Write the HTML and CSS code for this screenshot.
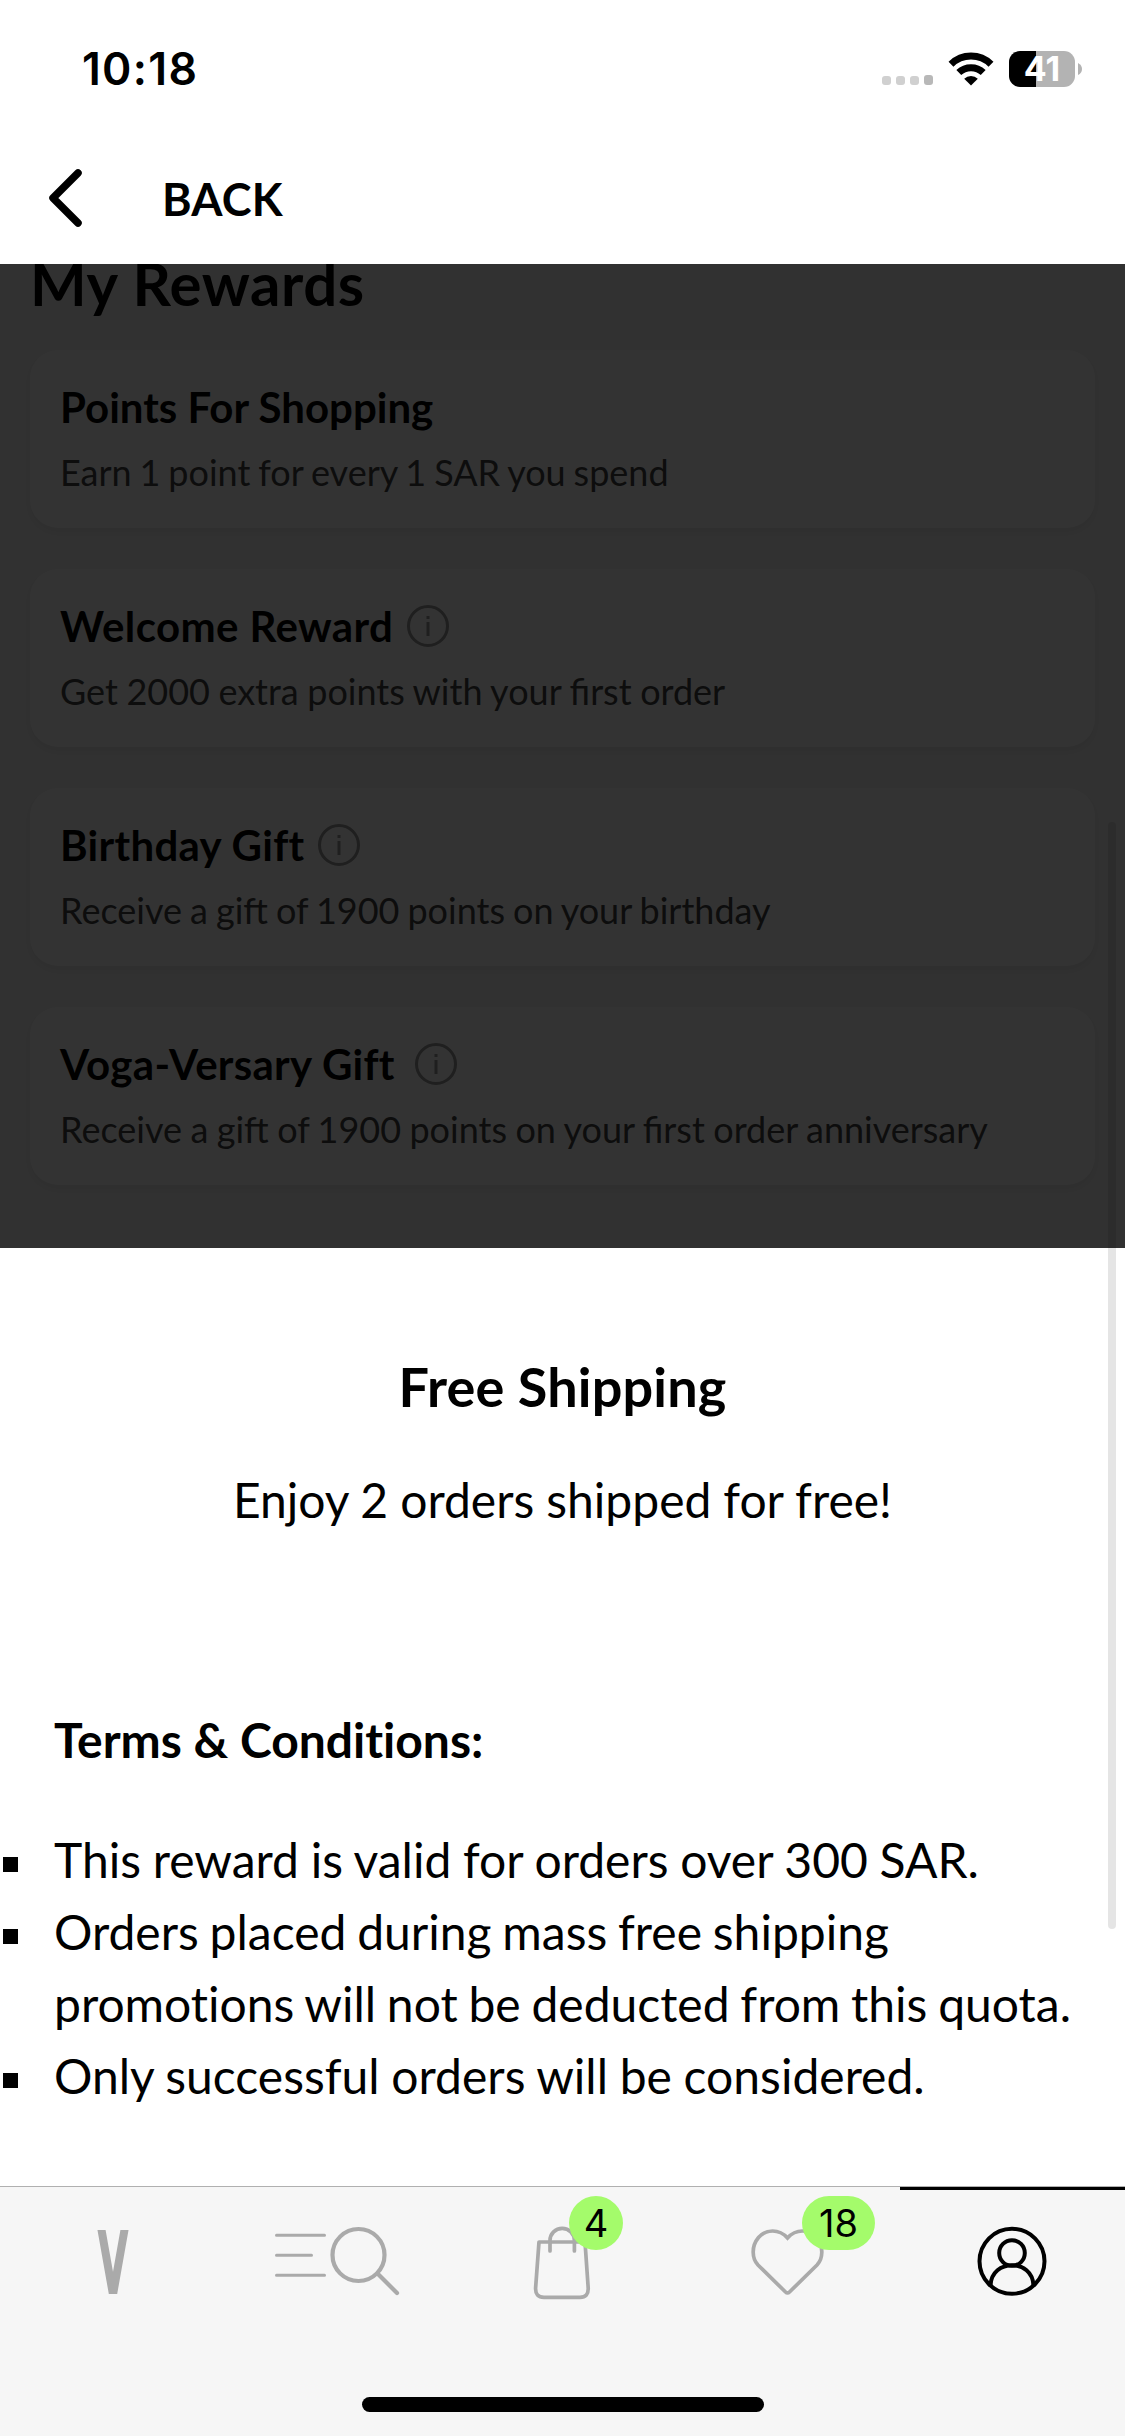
FILE: index.html
```html
<!DOCTYPE html>
<html lang="en">
<head>
<meta charset="utf-8">
<title>My Rewards</title>
<link rel="stylesheet" href="styles.css">
</head>
<body>
<div class="screen">
  <div class="status">
    <span class="time">10:18</span>
    <div class="status-icons">
      <span class="signal"><i></i><i></i><i></i><i class="strong"></i></span>
      <svg class="wifi" width="46" height="34" viewBox="0 0 46 34">
        <g fill="none" stroke="#000">
          <path d="M3 12.2a28.5 28.5 0 0 1 40 0" stroke-width="7"/>
          <path d="M10.8 20.6a17.5 17.5 0 0 1 24.4 0" stroke-width="7"/>
        </g>
        <path d="M23 33.5l-6.8-6.8a9.6 9.6 0 0 1 13.6 0z"/>
      </svg>
      <div class="battery"><span class="level">41</span><svg width="4" height="12" viewBox="0 0 4 12"><path d="M0 0q4 2 4 6t-4 6z" fill="#b3b3b3"/></svg></div>
    </div>
  </div>
  <header class="topbar">
    <svg width="36" height="60" viewBox="0 0 36 60"><path d="M32 6L7 31L32 56" fill="none" stroke="#000" stroke-width="7.500" stroke-linecap="round" stroke-linejoin="round"/></svg>
    <span class="back">BACK</span>
  </header>
  <main class="page">
    <h1 class="heading">My Rewards</h1>
    <section class="cards">
      <article class="card shopping">
        <h2 class="card-title">Points For Shopping</h2>
        <p class="card-text">Earn 1 point for every 1 SAR you spend</p>
      </article>
      <article class="card welcome">
        <h2 class="card-title">Welcome Reward<svg class="info" viewBox="0 0 42 42"><circle cx="21" cy="21" r="19.500"/><path d="M21 17v14M21 11v3"/></svg></h2>
        <p class="card-text">Get 2000 extra points with your first order</p>
      </article>
      <article class="card birthday">
        <h2 class="card-title">Birthday Gift<svg class="info" viewBox="0 0 42 42"><circle cx="21" cy="21" r="19.500"/><path d="M21 17v14M21 11v3"/></svg></h2>
        <p class="card-text">Receive a gift of 1900 points on your birthday</p>
      </article>
      <article class="card versary">
        <h2 class="card-title">Voga-Versary Gift<svg class="info" viewBox="0 0 42 42"><circle cx="21" cy="21" r="19.500"/><path d="M21 17v14M21 11v3"/></svg></h2>
        <p class="card-text">Receive a gift of 1900 points on your first order anniversary</p>
      </article>
    </section>
    <div class="dim"></div>
  </main>
  <section class="sheet">
    <h2 class="sheet-title">Free Shipping</h2>
    <p class="sheet-lead">Enjoy 2 orders shipped for free!</p>
    <h3 class="terms-title">Terms &amp; Conditions:</h3>
    <ul class="terms">
      <li>This reward is valid for orders over 300 SAR.</li>
      <li>Orders placed during mass free shipping promotions will not be deducted from this quota.</li>
      <li>Only successful orders will be considered.</li>
    </ul>
  </section>
  <footer class="bottom">
    <nav class="tabs">
      <a class="tab"><svg class="brand" width="32" height="64" viewBox="0 0 32 64"><path d="M3.100 -8L17.300 72M28.900 -8L14.700 72" fill="none" stroke="#aaa" stroke-width="8"/></svg></a>
      <a class="tab"><svg width="140" height="80" viewBox="0 0 140 80"><g fill="none" stroke="#aaa" stroke-linecap="round"><path d="M8.500 13.300H56.500M8.500 33.300H43.500M8.500 53.300H56.500" stroke-width="3"/><circle cx="90.500" cy="33" r="26" stroke-width="4.200"/><path d="M109.500 51.500L129 71" stroke-width="4.200"/></g></svg></a>
      <a class="tab"><svg width="80" height="80" viewBox="0 0 80 80"><g fill="none" stroke="#aaa" stroke-width="3.700" stroke-linecap="round" stroke-linejoin="round"><path d="M16 20H62L65.200 66Q65.600 75.300 57 75.300H21Q12.200 75.300 12.600 66Z"/><path d="M27 29V18.500A12.200 12.200 0 0 1 51.400 18.500V29"/></g></svg><span class="badge">4</span></a>
      <a class="tab"><svg width="80" height="80" viewBox="0 0 80 80"><path d="M39.500 16C31 6.500 18 7 10.500 15.500C3 24.500 4 36.500 10 43L37.500 70Q39.500 72 41.500 70L69 43C75 36.500 76 24.500 68.500 15.500C61 7 48 6.500 39.500 16Z" fill="none" stroke="#aaa" stroke-width="3.700"/></svg><span class="badge wide">18</span></a>
      <a class="tab active"><svg width="80" height="80" viewBox="0 0 80 80"><g fill="none" stroke="#000" stroke-width="4"><circle cx="39" cy="39.300" r="32.500"/><circle cx="39" cy="31" r="12.800"/><path d="M17.500 63.500C18.500 36.500 59.500 36.500 60.500 63.500"/></g></svg></a>
    </nav>
    <div class="home-indicator"></div>
  </footer>
  <div class="scrollbar"></div>
</div>
</body>
</html>
```
FILE: styles.css
```css
* { box-sizing: border-box; margin: 0; padding: 0; }
body { background: #fff; color: #000; font-family: Lato, "Open Sans", sans-serif; }
.screen { position: relative; display: flex; flex-direction: column; width: 1125px; height: 2436px; overflow: hidden; }

.status { display: flex; justify-content: space-between; align-items: center; height: 138px; padding: 0 43px 0 82px; font-family: Inter, sans-serif; }
.time { font-size: 44.500px; font-weight: 600; line-height: 54px; letter-spacing: 1.300px; }
.status-icons { display: flex; align-items: center; }
.signal { display: flex; align-items: flex-end; gap: 5px; margin: 22px 15px 0 0; }
.signal i { width: 9px; height: 9px; border-radius: 3px; background: #d0d0d0; }
.signal .strong { height: 10px; background: #b8b8b8; }
.wifi { display: block; margin-right: 15px; }
.battery { display: flex; align-items: center; gap: 3px; }
.level { width: 66px; height: 36px; border-radius: 11px; background: linear-gradient(90deg, #000 27px, #b3b3b3 27px); color: #fff; font-size: 34px; font-weight: 700; line-height: 36px; text-align: center; }

.topbar { display: flex; align-items: center; height: 126px; padding: 0 46px 8px; }
.back { margin: 3px 0 0 80px; font-size: 45px; font-weight: 700; line-height: 54px; letter-spacing: .200px; }

.page { position: relative; height: 984px; padding: 0 30px; background: #f6f6f6; overflow: hidden; }
.heading { margin-top: -17px; font-size: 60px; font-weight: 700; line-height: 72px; letter-spacing: .550px; }
.cards { display: flex; flex-direction: column; gap: 41px; margin-top: 31px; }
.card { height: 178px; padding: 32px 30px 0; border-radius: 28px; background: #fff; box-shadow: 0 4px 12px rgba(0, 0, 0, .08); }
.card-title { display: flex; align-items: center; font-size: 42px; font-weight: 700; line-height: 50px; font-variant-ligatures: none; }
.info { width: 42px; height: 42px; fill: none; stroke: #999; stroke-width: 3; }
.card-text { margin-top: 18px; color: #444; font-size: 36px; line-height: 44px; white-space: nowrap; }
.shopping .card-text { word-spacing: -1.300px; }
.welcome .card-title { letter-spacing: .400px; gap: 14px; }
.welcome .card-text { word-spacing: -.700px; }
.birthday .card-title { letter-spacing: .300px; gap: 14px; }
.birthday .card-text { word-spacing: -1.200px; }
.versary .card-title { letter-spacing: .280px; gap: 20px; }
.versary .card-text { word-spacing: -.800px; }
.dim { position: absolute; inset: 0; background: rgba(0, 0, 0, .8); }

.sheet { height: 938px; padding: 106px 54px 0; background: #fff; font-variant-ligatures: none; }
.sheet-title { font-size: 54px; font-weight: 700; line-height: 66px; letter-spacing: .150px; text-align: center; }
.sheet-lead { margin-top: 44px; font-size: 48px; line-height: 72px; word-spacing: -.300px; text-align: center; }
.terms-title { margin-top: 168px; font-size: 48px; font-weight: 700; line-height: 72px; }
.terms { margin-top: 48px; list-style: none; font-size: 48px; line-height: 72px; }
.terms li { position: relative; margin-right: -20px; word-spacing: -.600px; }
.terms li:nth-child(2) { word-spacing: -1.500px; }
.terms li::before { content: ""; position: absolute; left: -51px; top: 33px; width: 15px; height: 15px; background: #000; }

.bottom { height: 250px; border-top: 1px solid #b0b0b0; background: #f6f6f6; }
.tabs { display: flex; height: 210px; }
.tab { position: relative; display: flex; justify-content: center; width: 225px; padding-top: 35px; }
.tab svg { display: block; }
.tab .brand { margin-top: 8px; overflow: hidden; }
.active { border-top: 3px solid #000; padding-top: 32px; }
.badge { position: absolute; left: 119px; top: 9px; width: 54px; height: 54px; border-radius: 27px; background: #a4fb6b; font-family: Inter, sans-serif; font-size: 38px; line-height: 54px; text-align: center; }
.wide { left: 127px; width: 73px; }
.home-indicator { width: 402px; height: 15px; margin: 0 auto; border-radius: 8px; background: #000; }

.scrollbar { position: absolute; left: 1108px; top: 822px; width: 8px; height: 1107px; border-radius: 4px; background: rgba(0, 0, 0, .1); }
```
